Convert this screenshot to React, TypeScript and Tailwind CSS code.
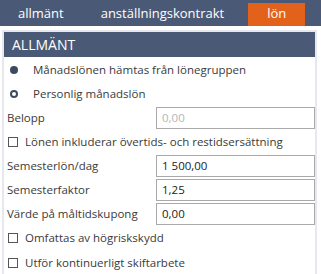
import React from 'react';

const Radio = ({ checked }: { checked?: boolean }) => (
  <span
    className={
      checked
        ? 'inline-block h-[8px] w-[8px] rounded-full bg-[#3c4a60]'
        : 'inline-block h-[8px] w-[8px] rounded-full border-2 border-[#3c4a60] bg-white'
    }
  />
);

const Check = () => <span className="inline-block h-[10px] w-[10px] border border-[#555] bg-white" />;

const Field = ({ label, value, disabled }: { label: string; value: string; disabled?: boolean }) => (
  <div className="flex h-[24px] items-center">
    <span className="w-[152px] pl-[3px]">{label}</span>
    <div
      className={
        'flex h-[22px] flex-1 items-center border border-[#a9a9a9] px-[5px] ' +
        (disabled ? 'text-[#b5b5b5]' : 'text-[#222]')
      }
    >
      {value}
    </div>
  </div>
);

export default function App() {
  return (
    <div className="h-[274px] w-[321px] bg-white text-[11.5px] text-[#3a3a3a] font-['Open_Sans',sans-serif]">
      <div className="flex h-[26px] items-end bg-[#4a5a76] pl-[18px] text-[13px] text-white">
        <span className="h-[23px] leading-[21px]">allmänt</span>
        <span className="ml-[37px] h-[23px] leading-[21px]">anställningskontrakt</span>
        <span className="ml-[24px] h-[23px] w-[57px] bg-[#e2621b] text-center leading-[21px]">lön</span>
      </div>
      <div className="mx-[2px] mt-[4px] w-[315px] border-2 border-[#e6e8ee]">
        <div className="flex h-[25px] items-center bg-[#4a5a76] pl-[8px] text-[14px] text-white">ALLMÄNT</div>
        <div className="pb-[2px]">
          <div className="flex h-[25px] items-center gap-[15px] pl-[6px] pt-[1px]">
            <Radio checked />
            <span>Månadslönen hämtas från lönegruppen</span>
          </div>
          <div className="flex h-[24px] items-center gap-[15px] pl-[6px]">
            <Radio />
            <span>Personlig månadslön</span>
          </div>
          <Field label="Belopp" value="0,00" disabled />
          <div className="flex h-[24px] items-center gap-[7px] pl-[4px]">
            <Check />
            <span>Lönen inkluderar övertids- och restidsersättning</span>
          </div>
          <Field label="Semesterlön/dag" value="1 500,00" />
          <Field label="Semesterfaktor" value="1,25" />
          <Field label="Värde på måltidskupong" value="0,00" />
          <div className="flex h-[24px] items-center gap-[7px] pl-[4px]">
            <Check />
            <span>Omfattas av högriskskydd</span>
          </div>
          <div className="flex h-[25px] items-center gap-[7px] pl-[4px]">
            <Check />
            <span>Utför kontinuerligt skiftarbete</span>
          </div>
        </div>
      </div>
    </div>
  );
}
